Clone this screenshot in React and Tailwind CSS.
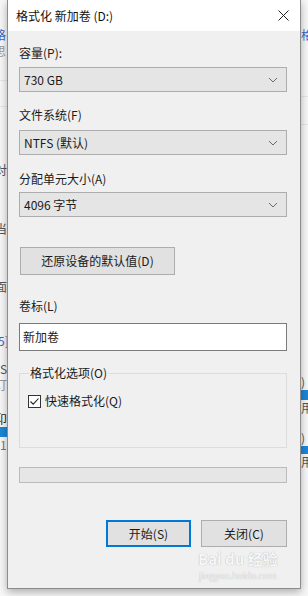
const font = { fontFamily: '"Microsoft YaHei UI", "Noto Sans CJK SC", "Noto Sans", sans-serif' };

const Chevron = () => (
    <svg width="10" height="6" viewBox="0 0 10 6" className="shrink-0">
        <path d="M1 1 L5 5 L9 1" fill="none" stroke="#6b6b6b" strokeWidth="1" />
    </svg>
);

const Select = ({ value, className = "" }) => (
    <div className={`flex h-[25px] w-[268px] items-center justify-between border border-[#adadad] bg-[#e5e5e5] pl-[4px] pr-[8px] text-[12px] text-[#1a1a1a] ${className}`}>
        <span>{value}</span>
        <Chevron />
    </div>
);

const Label = ({ children, className = "" }) => (
    <div className={`h-[16px] text-[12px] leading-[16px] text-[#1a1a1a] ${className}`}>{children}</div>
);

const LeftStrip = () => (
    <div className="flex w-[7px] shrink-0 flex-col overflow-hidden text-[12px] leading-[16px] text-[#555]">
        <div className="h-[27px] shrink-0" />
        <div className="-ml-[6px] h-[16px] shrink-0 text-[#3b63c4]">格</div>
        <div className="-ml-[6px] h-[16px] shrink-0 text-[#999]">思</div>
        <div className="h-[22px] shrink-0 border-b border-[#e6e6e6]" />
        <div className="h-[26px] shrink-0 border-b border-[#e6e6e6]" />
        <div className="h-[55px] shrink-0" />
        <div className="-ml-[5px] h-[16px] shrink-0">对</div>
        <div className="h-[43px] shrink-0" />
        <div className="-ml-[5px] h-[16px] shrink-0">当</div>
        <div className="h-[42px] shrink-0" />
        <div className="-ml-[5px] h-[16px] shrink-0">面</div>
        <div className="h-[38px] shrink-0" />
        <div className="-ml-[2px] h-[16px] shrink-0 text-[#3b63c4]">5]</div>
        <div className="h-[12px] shrink-0" />
        <div className="h-[16px] shrink-0">S</div>
        <div className="-ml-[5px] h-[16px] shrink-0 text-[#999]">订</div>
        <div className="h-[18px] shrink-0" />
        <div className="-ml-[5px] h-[16px] shrink-0 text-[#222]">卬</div>
        <div className="h-[10px] shrink-0 bg-[#1c86d6]" />
        <div className="h-[16px] shrink-0 text-[#777]">1</div>
    </div>
);

const RightStrip = () => (
    <div className="flex w-[7px] shrink-0 flex-col overflow-hidden text-[12px] leading-[16px] text-[#555]">
        <div className="h-[27px] shrink-0" />
        <div className="h-[16px] shrink-0 text-[#3b63c4]">格</div>
        <div className="h-[54px] shrink-0 border-b border-[#e6e6e6]" />
        <div className="h-[28px] shrink-0 border-b border-[#e6e6e6]" />
        <div className="h-[249px] shrink-0" />
        <div className="h-[16px] shrink-0">)</div>
        <div className="h-[10px] shrink-0 bg-[#1c86d6]" />
        <div className="h-[16px] shrink-0">用</div>
        <div className="h-[14px] shrink-0" />
        <div className="h-[16px] shrink-0">)</div>
        <div className="h-[8px] shrink-0 bg-[#1c86d6]" />
        <div className="h-[16px] shrink-0">用</div>
    </div>
);

const App = () => {
    return (
        <div className="flex h-[596px] w-[308px] overflow-hidden bg-[#f7f7f7]" style={font}>
            <LeftStrip />

            <div className="relative flex h-[589px] w-[294px] shrink-0 flex-col border-x border-b border-[#8c8c8c] bg-[#f0f0f0] shadow-[0_3px_8px_rgba(0,0,0,0.3)]">
                <div className="flex h-[31px] shrink-0 items-center justify-between bg-white pl-[8px] pr-[11px]">
                    <span className="text-[12px] text-[#111]">格式化 新加卷 (D:)</span>
                    <svg width="11" height="11" viewBox="0 0 11 11">
                        <path d="M0.5 0.5 L10.5 10.5 M10.5 0.5 L0.5 10.5" stroke="#222" strokeWidth="1" />
                    </svg>
                </div>

                <div className="flex flex-col pl-[11px]">
                    <Label className="mt-[14px]">容量(P):</Label>
                    <Select value="730 GB" className="mt-[6px]" />

                    <Label className="mt-[15px]">文件系统(F)</Label>
                    <Select value="NTFS (默认)" className="mt-[7px]" />

                    <Label className="mt-[16px]">分配单元大小(A)</Label>
                    <Select value="4096 字节" className="mt-[5px]" />

                    <div className="ml-[1px] mt-[30px] flex h-[28px] w-[155px] items-center justify-center border border-[#adadad] bg-[#e1e1e1] text-[12px] text-[#1a1a1a]">
                        还原设备的默认值(D)
                    </div>

                    <Label className="mt-[23px]">卷标(L)</Label>
                    <div className="mt-[9px] flex h-[28px] w-[268px] items-center border border-[#7a7a7a] bg-white pl-[3px] text-[12px] text-[#1a1a1a]">
                        新加卷
                    </div>

                    <fieldset className="mt-[14px] h-[83px] w-[268px] border border-[#dcdcdc] px-[8px]">
                        <legend className="ml-[1px] px-[1px] text-[12px] leading-[16px] text-[#1a1a1a]">格式化选项(O)</legend>
                        <div className="mt-[12px] flex items-center gap-[4px]">
                            <div className="flex h-[13px] w-[13px] items-center justify-center border border-[#333] bg-white">
                                <svg width="11" height="11" viewBox="0 0 11 11">
                                    <path d="M1.5 5.5 L4.2 8.2 L9.5 2.5" fill="none" stroke="#222" strokeWidth="1.1" />
                                </svg>
                            </div>
                            <span className="text-[12px] leading-[16px] text-[#1a1a1a]">快速格式化(Q)</span>
                        </div>
                    </fieldset>

                    <div className="mt-[19px] h-[16px] w-[268px] border border-[#bcbcbc] bg-[#e6e6e6]" />

                    <div className="mt-[37px] flex w-[268px] justify-end gap-[10px]">
                        <div className="flex h-[27px] w-[85px] items-center justify-center border-2 border-[#0078d7] bg-[#e1e1e1] text-[12px] text-[#1a1a1a]">
                            开始(S)
                        </div>
                        <div className="flex h-[27px] w-[86px] items-center justify-center border border-[#adadad] bg-[#e1e1e1] text-[12px] text-[#1a1a1a]">
                            关闭(C)
                        </div>
                    </div>
                </div>

                <div className="pointer-events-none absolute left-[190px] top-[550px] flex flex-col items-center gap-[3px] text-[#f7f7f7] [text-shadow:0_0_1px_#a0a0a0]">
                    <span className="text-[15px] font-bold leading-[17px]">Bai du 经验</span>
                    <span className="text-[9px] leading-[11px]">jingyan.baidu.com</span>
                </div>
            </div>

            <RightStrip />
        </div>
    );
};

export default App;
